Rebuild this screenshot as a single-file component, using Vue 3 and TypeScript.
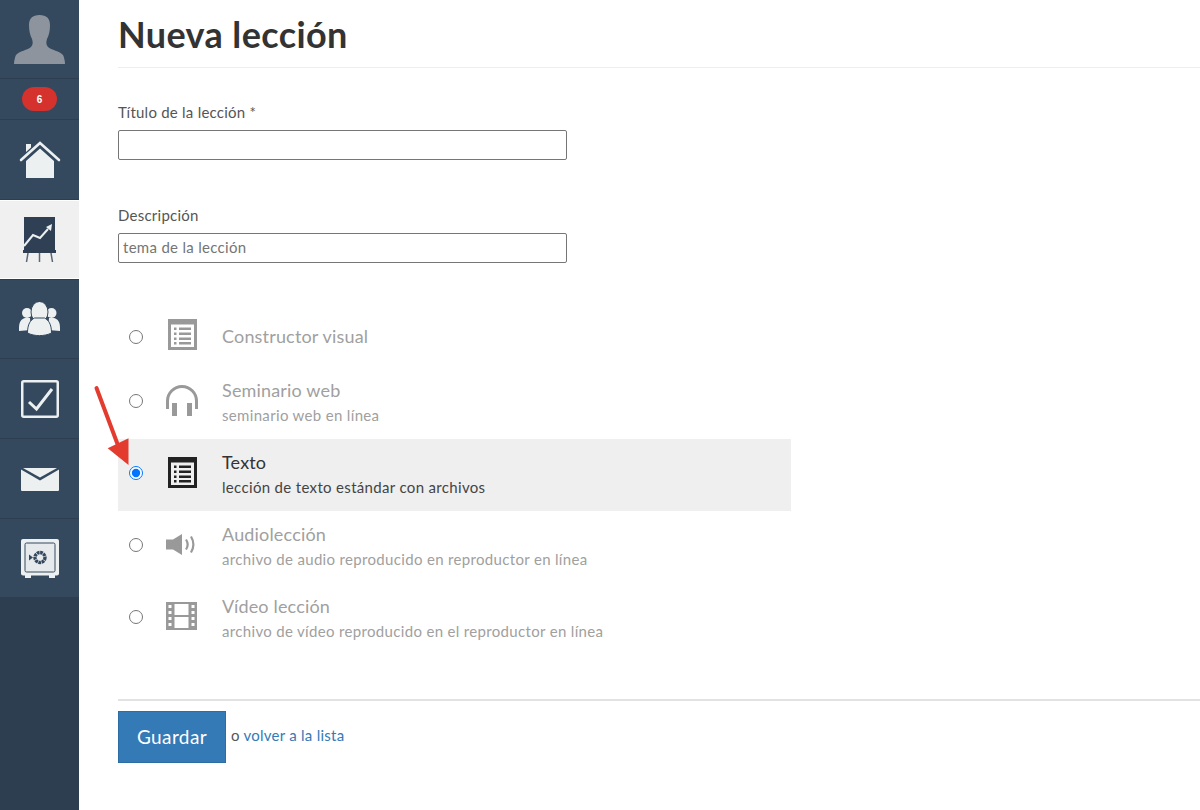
<script setup lang="ts">
interface Lesson { id: string; title: string; sub: string; checked?: boolean }
const lessons: Lesson[] = [
  { id: 'visual', title: 'Constructor visual', sub: '' },
  { id: 'web', title: 'Seminario web', sub: 'seminario web en línea' },
  { id: 'text', title: 'Texto', sub: 'lección de texto estándar con archivos', checked: true },
  { id: 'audio', title: 'Audiolección', sub: 'archivo de audio reproducido en reproductor en línea' },
  { id: 'video', title: 'Vídeo lección', sub: 'archivo de vídeo reproducido en el reproductor en línea' }
]
</script>

<template>
  <div class="page">
    <aside class="side">
      <div class="nav avatar">
        <svg width="51" height="49" viewBox="0 0 51 49"><path fill="#8d949d" d="M25.500 0c7 0 10.500 3.500 10.500 10 0 6-1 10-3 14-1 3-1 6 1 8 3 3 12 4 15 8 1 2 2 6 2 9H0c0-3 1-7 2-9 3-4 12-5 15-8 2-2 2-5 1-8-2-4-3-8-3-14 0-6.500 3.500-10 10.500-10z"/></svg>
      </div>
      <div class="nav badge-row"><span class="badge">6</span></div>
      <div class="nav home">
        <svg width="42" height="38" viewBox="0 0 42 38"><path fill="none" stroke="#ecf0f1" stroke-width="2.600" stroke-linecap="round" d="M2 19 21 2l19 17"/><path fill="#ecf0f1" d="M7 3h5v3.500l-5 4.500zM7 20 21 7.500 35 20v17H7z"/></svg>
      </div>
      <div class="nav active">
        <svg width="33" height="45" viewBox="0 0 33 45"><rect x="1" y="0" width="31" height="33" fill="#2f4054"/><path fill="none" stroke="#ecf0f1" stroke-width="2" d="M1 29l9-11 7 3 8-9"/><path fill="#ecf0f1" d="M23 10l6-3-1 7z"/><rect x="0" y="33" width="33" height="3" fill="#2f4054"/><path fill="none" stroke="#5a6878" stroke-width="1.500" d="M5 36l-1.500 9M16.500 36v9M28 36l1.500 9"/></svg>
      </div>
      <div class="nav group">
        <svg width="41" height="34" viewBox="0 0 41 34"><circle cx="8" cy="11" r="5" fill="#ecf0f1"/><circle cx="32.500" cy="11" r="5" fill="#ecf0f1"/><path fill="#ecf0f1" d="M0 26c0-6 2-9 6-10h5l1 12-12 1zM41 26c0-6-2-9-6-10h-5l-1 12 12 1z"/><ellipse cx="20.500" cy="10" rx="8.500" ry="10.500" fill="#ecf0f1" stroke="#34485e" stroke-width="1"/><path fill="#ecf0f1" stroke="#34485e" stroke-width="1" d="M8.500 31c0-9 3-13 7-15h10c4 2 7 6 7 15-7 3.500-17 3.500-24 0z"/></svg>
      </div>
      <div class="nav">
        <svg width="38" height="38" viewBox="0 0 38 38"><rect x="1.250" y="1.250" width="35.500" height="35.500" rx="1.500" fill="none" stroke="#ecf0f1" stroke-width="2.500"/><path fill="none" stroke="#ecf0f1" stroke-width="3" d="M8 22l7.500 7L31 9"/></svg>
      </div>
      <div class="nav mail">
        <svg width="38" height="23" viewBox="0 0 38 23"><path fill="#ecf0f1" d="M0 1.500l19 11 19-11V22a1 1 0 0 1-1 1H1a1 1 0 0 1-1-1z"/><path fill="#ecf0f1" d="M2 0h34L19 9.500z"/></svg>
      </div>
      <div class="nav safe">
        <svg width="38" height="39" viewBox="0 0 38 39"><rect x="0" y="0" width="38" height="36.500" rx="2" fill="#ecf0f1"/><rect x="4" y="4" width="30" height="29" rx="1.500" fill="#e6eaec" stroke="#34485e" stroke-width="1"/><path fill="#ecf0f1" d="M4 36h6v3H4zM28 36h6v3h-6z"/><circle cx="19" cy="18.500" r="5" fill="none" stroke="#34485e" stroke-width="3.400" stroke-dasharray="2.700 .6"/><path fill="#34485e" d="M8 15.500l4 3-4 3z"/></svg>
      </div>
      <div class="side-fill"></div>
    </aside>

    <main class="main">
      <header class="head"><h1>Nueva lección</h1></header>

      <form class="form" @submit.prevent>
        <label class="label" for="t">Título de la lección *</label>
        <input id="t" class="field" type="text" />

        <label class="label second" for="d">Descripción</label>
        <input id="d" class="field" type="text" placeholder="tema de la lección" />

        <div class="types">
          <label v-for="l in lessons" :key="l.id" class="row" :class="[l.id, { on: l.checked }]">
            <span class="radio-cell"><input type="radio" name="type" :checked="l.checked" /></span>
            <span class="icon">
              <svg v-if="l.id === 'visual' || l.id === 'text'" width="29" height="31" viewBox="0 0 29 31">
                <path fill="currentColor" fill-rule="evenodd" d="M0 0h29v31H0zM3 5.500V28h23V5.500z"/>
                <path fill="currentColor" d="M6 8.500h2.500V11H6zM11 8.500h12V11H11zM6 13.500h2.500V16H6zM11 13.500h12V16H11zM6 18.500h2.500V21H6zM11 18.500h12V21H11zM6 23h2.500v2.500H6zM11 23h12v2.500H11z"/>
              </svg>
              <svg v-else-if="l.id === 'web'" width="32" height="31" viewBox="0 0 32 31">
                <path fill="none" stroke="currentColor" stroke-width="3" d="M1.500 24v-8a14.500 14.500 0 0 1 29 0v8"/>
                <rect x="6" y="18" width="5" height="13" fill="currentColor"/><rect x="21" y="18" width="5" height="13" fill="currentColor"/>
              </svg>
              <svg v-else-if="l.id === 'audio'" class="shift" width="30" height="21" viewBox="0 0 30 21">
                <path fill="currentColor" d="M0 5.500h7L16 0v21l-9-5.500H0z"/>
                <path fill="none" stroke="currentColor" stroke-width="2.200" d="M20 5.500c2 3 2 7 0 10M25 2.500c3 5 3 11 0 16"/>
              </svg>
              <svg v-else class="shift" width="31" height="28" viewBox="0 0 31 28">
                <path fill="currentColor" fill-rule="evenodd" d="M0 0h31v28H0zM8.500 2v11h14V2zM8.500 15v11h14V15zM2.500 3v3h3V3zM2.500 9v3h3V9zM2.500 15v3h3v-3zM2.500 21v3h3v-3zM25.500 3v3h3V3zM25.500 9v3h3V9zM25.500 15v3h3v-3zM25.500 21v3h3v-3z"/>
              </svg>
            </span>
            <span class="copy">
              <span class="title">{{ l.title }}</span>
              <span v-if="l.sub" class="sub">{{ l.sub }}</span>
            </span>
          </label>
        </div>

        <div class="actions">
          <button class="save" type="submit">Guardar</button>
          <span class="or">o <a href="#" class="back">volver a la lista</a></span>
        </div>
      </form>
    </main>

    <svg class="arrow" width="40" height="90" viewBox="0 0 40 90">
      <path fill="none" stroke="#e33b2e" stroke-width="4" stroke-linecap="round" d="M6.500 8 29 68"/>
      <path fill="#e33b2e" d="M38.500 85 17.700 68.300l20.800-10z"/>
    </svg>
  </div>
</template>

<style>
html, body { margin: 0; background: #fff; }
</style>

<style scoped>
.page { position: relative; display: flex; height: 810px; overflow: hidden; font-family: Lato, "Open Sans", sans-serif; color: #333; }
.side { width: 79px; flex: none; display: flex; flex-direction: column; background: #34485e; }
.nav { height: 80px; box-sizing: border-box; display: flex; align-items: center; justify-content: center; border-bottom: 1px solid #2c3e50; flex: none; }
.avatar { height: 79px; }
.badge-row { height: 41px; }
.badge { width: 35px; height: 24px; border-radius: 12px; background: #d5312d; color: #fff; font: bold 10px "Liberation Sans", sans-serif; display: flex; align-items: center; justify-content: center; }
.active { height: 79px; background: #f0f0f0; border-top: 1px solid #fff; border-bottom: 1px solid #fff; }
.group { border-top: 1px solid #2c3e50; }
.mail { padding-top: 2px; }
.safe { height: 78px; border-bottom: 0; }
.side-fill { flex: 1; background: #2c3e50; }
.main { flex: 1; min-width: 0; padding-left: 39px; }
.head { height: 67px; border-bottom: 1px solid #eee; display: flex; align-items: center; }
h1 { margin: 0; font-size: 36px; font-weight: 700; line-height: 40px; color: #333; letter-spacing: .38px; }
.form { display: flex; flex-direction: column; align-items: flex-start; padding-top: 34px; }
.label { font-size: 15px; line-height: 20px; height: 20px; margin-bottom: 8px; color: #555; letter-spacing: .24px; }
.label.second { margin-top: 45px; }
.field { box-sizing: border-box; width: 449px; height: 30px; border: 1px solid #767676; border-radius: 2px; padding: 0 4px 2px; font: 15px Lato, sans-serif; letter-spacing: .3px; color: #333; outline: 0; }
.field::placeholder { color: #757575; }
.types { margin-top: 48px; width: 673px; display: flex; flex-direction: column; }
.row { display: flex; align-items: center; height: 72px; color: #a0a0a0; }
.row.visual { height: 56px; }
.row.on { background: #efefef; color: #333; }
.radio-cell { width: 36px; display: flex; justify-content: center; flex: none; padding-bottom: 4px; }
.radio-cell input { margin: 0; width: 14px; height: 14px; }
.icon { width: 32px; margin-left: 12px; margin-right: 24px; height: 34px; display: flex; align-items: center; justify-content: center; flex: none; color: #999; padding-bottom: 6px; }
.visual .icon { padding-bottom: 9px; }
.shift { margin-left: -2px; }
.on .icon { color: #222; }
.copy { display: flex; flex-direction: column; gap: 6px; padding-bottom: 2px; }
.visual .copy { padding-bottom: 6px; }
.title { font-size: 18px; line-height: 20px; letter-spacing: .17px; }
.sub { font-size: 15px; line-height: 18px; letter-spacing: .33px; }
.on .sub { color: #444; }
.actions { margin-top: 44px; width: 1082px; border-top: 2px solid #e2e2e2; padding-top: 10px; display: flex; align-items: center; gap: 5px; }
.save { box-sizing: border-box; width: 108px; height: 52px; background: #337ab7; border: 1px solid #2e6da4; color: #fff; font: 19px Lato, sans-serif; letter-spacing: .4px; padding: 0 0 2px; }
.or { font-size: 15px; color: #555; letter-spacing: .25px; margin-top: -4px; }
.back { color: #337ab7; text-decoration: none; }
.arrow { position: absolute; left: 90px; top: 380px; }
</style>
